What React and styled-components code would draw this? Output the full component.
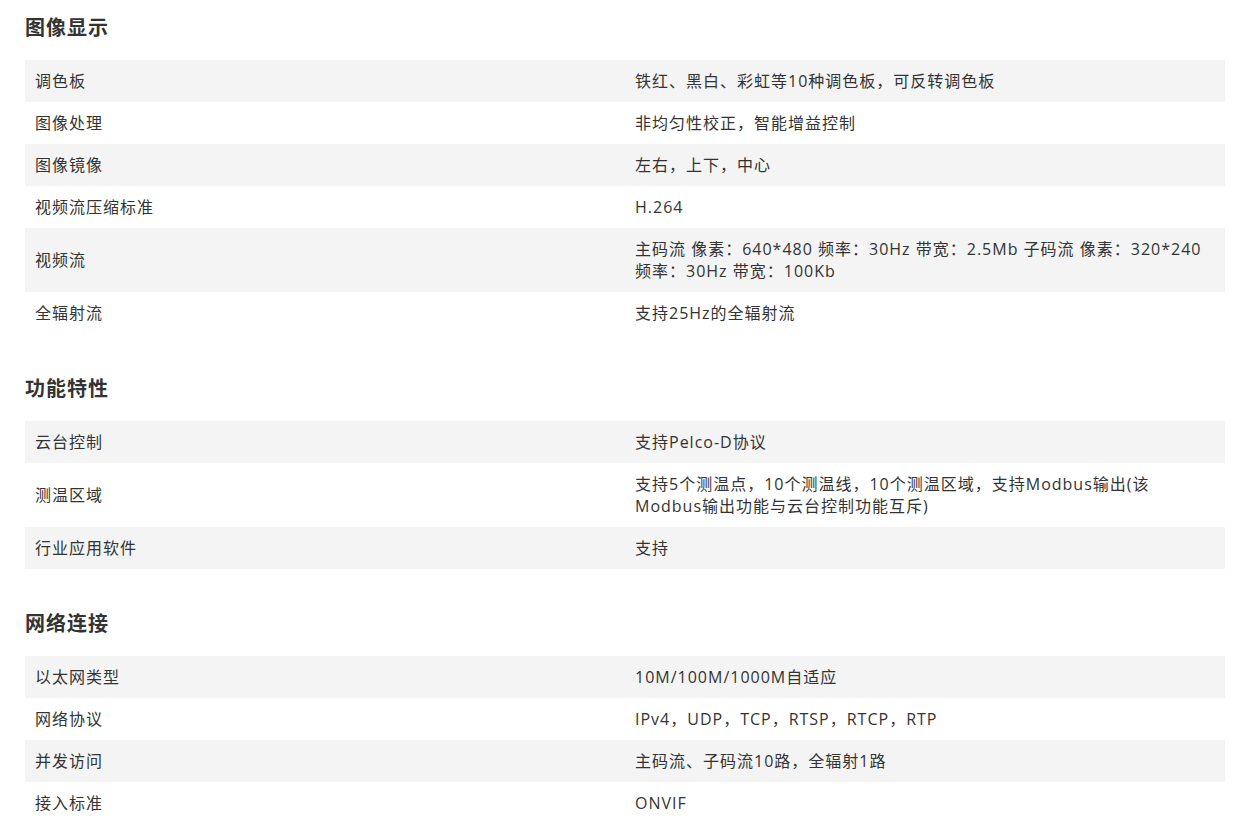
import React from "react";
import styled, { createGlobalStyle } from "styled-components";

const GlobalStyle = createGlobalStyle`
  body {
    margin: 0;
    background: #fff;
    font-family: "Open Sans", "Noto Sans CJK SC", sans-serif;
    color: #333;
  }
`;

const specs = [
  {
    title: "图像显示",
    rows: [
      ["调色板", "铁红、黑白、彩虹等10种调色板，可反转调色板"],
      ["图像处理", "非均匀性校正，智能增益控制"],
      ["图像镜像", "左右，上下，中心"],
      ["视频流压缩标准", "H.264"],
      [
        "视频流",
        "主码流 像素：640*480 频率：30Hz 带宽：2.5Mb 子码流 像素：320*240 频率：30Hz 带宽：100Kb",
      ],
      ["全辐射流", "支持25Hz的全辐射流"],
    ],
  },
  {
    title: "功能特性",
    rows: [
      ["云台控制", "支持Pelco-D协议"],
      [
        "测温区域",
        "支持5个测温点，10个测温线，10个测温区域，支持Modbus输出(该Modbus输出功能与云台控制功能互斥)",
      ],
      ["行业应用软件", "支持"],
    ],
  },
  {
    title: "网络连接",
    rows: [
      ["以太网类型", "10M/100M/1000M自适应"],
      ["网络协议", "IPv4，UDP，TCP，RTSP，RTCP，RTP"],
      ["并发访问", "主码流、子码流10路，全辐射1路"],
      ["接入标准", "ONVIF"],
    ],
  },
];

export default function App() {
  return (
    <>
      <GlobalStyle />
      <Page>
        {specs.map((section) => (
          <Section key={section.title}>
            <Heading>{section.title}</Heading>
            <Table>
              {section.rows.map(([name, value], i) => (
                <Row key={name} striped={i % 2 === 0}>
                  <Label>{name}</Label>
                  <Value>{value}</Value>
                </Row>
              ))}
            </Table>
          </Section>
        ))}
      </Page>
    </>
  );
}

const Page = styled.div`
  width: 1200px;
  padding: 0 0 0 25px;
`;

const Section = styled.section`
  margin-bottom: 27px;
`;

const Heading = styled.h2`
  margin: 0;
  height: 60px;
  padding-top: 14px;
  box-sizing: border-box;
  font-size: 20px;
  line-height: 28px;
  font-weight: 700;
  letter-spacing: 1px;
  color: #333;
`;

const Table = styled.div`
  display: flex;
  flex-direction: column;
`;

const Row = styled.div.withConfig({
  shouldForwardProp: (prop) => prop !== "striped",
})`
  display: grid;
  grid-template-columns: 1fr 1fr;
  align-items: center;
  background: ${(props) => (props.striped ? "#f4f4f4" : "#fff")};
  font-size: 16px;
  line-height: 22px;
  letter-spacing: 1px;
`;

const Label = styled.div`
  padding: 10px;
`;

const Value = styled.div`
  padding: 10px 15px 10px 10px;
`;
